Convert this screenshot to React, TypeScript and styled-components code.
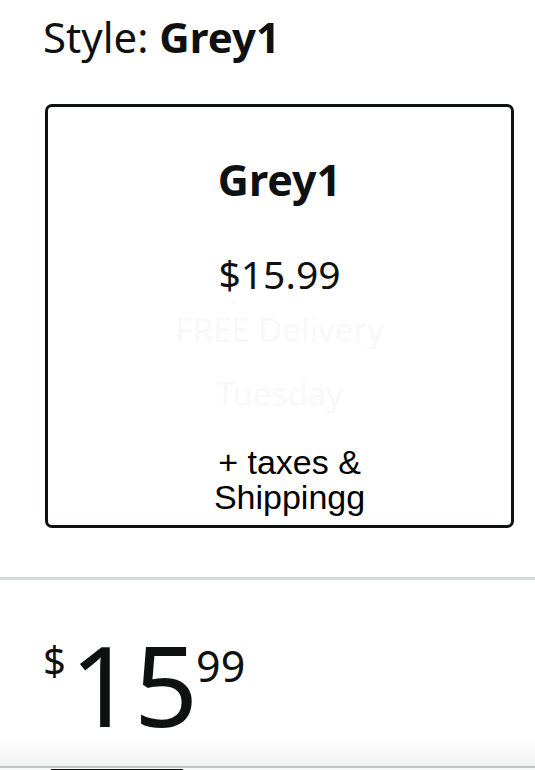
import React from "react";
import styled, { createGlobalStyle } from "styled-components";

const GlobalStyle = createGlobalStyle`
  html, body {
    margin: 0;
    padding: 0;
    background: #ffffff;
  }
  body {
    font-family: "Noto Sans", "Open Sans", Arial, sans-serif;
    color: #0f1111;
  }
`;

const Page = styled.div`
  width: 535px;
  height: 770px;
  display: flex;
  flex-direction: column;
  overflow: hidden;

  & > * {
    flex-shrink: 0;
  }
`;

const StyleLabel = styled.div`
  padding: 13px 0 0 43px;
  font-size: 42px;
  line-height: 48px;
  color: #0f1111;

  b {
    font-weight: 700;
  }
`;

const OptionCard = styled.div`
  box-sizing: border-box;
  margin: 43px 21px 0 45px;
  height: 424px;
  border: 3px solid #0f1111;
  border-radius: 7px;
  display: flex;
  flex-direction: column;
  align-items: center;
`;

const OptionName = styled.div`
  margin-top: 48px;
  font-size: 43px;
  font-weight: 700;
  line-height: 50px;
`;

const OptionPrice = styled.div`
  margin-top: 47px;
  font-size: 39px;
  line-height: 44px;
`;

// faint leftover of the delivery line, barely visible on the card
const GhostLine = styled.div<{ gap: number }>`
  margin-top: ${({ gap }) => gap}px;
  font-size: 33px;
  line-height: 40px;
  color: #f8f8f8;
`;

const TaxNote = styled.div`
  margin-top: auto;
  margin-bottom: 10px;
  padding-left: 20px;
  width: 190px;
  text-align: center;
  font-family: "Liberation Sans", Arial, sans-serif;
  font-size: 34px;
  line-height: 35px;
  color: #000000;
`;

const Divider = styled.div`
  margin-top: 49px;
  height: 3px;
  background: #d5d9d9;
`;

const PriceRow = styled.div`
  display: flex;
  align-items: flex-start;
  padding: 48px 0 0 43px;
  color: #0f1111;
  line-height: 1;
`;

const PriceSymbol = styled.span`
  margin-top: 12px;
  font-size: 40px;
`;

const PriceWhole = styled.span`
  margin-left: 4px;
  font-size: 112px;
`;

const PriceFraction = styled.span`
  margin-top: 16px;
  margin-left: -2px;
  font-size: 43px;
`;

const BottomShade = styled.div`
  margin-top: auto;
  height: 26px;
  background: linear-gradient(to bottom, #ffffff, #f1f2f2);
`;

const TabBar = styled.div`
  height: 4px;
  border-top: 2px solid #bfc4c4;
  background: #f7f8f8;
`;

const TabIndicator = styled.div`
  margin-left: 51px;
  width: 132px;
  height: 3px;
  margin-top: 1px;
  background: #0f1111;
`;

export default function App() {
  return (
    <Page>
      <GlobalStyle />
      <StyleLabel>
        Style: <b>Grey1</b>
      </StyleLabel>
      <OptionCard>
        <OptionName>Grey1</OptionName>
        <OptionPrice>$15.99</OptionPrice>
        <GhostLine gap={14}>FREE Delivery</GhostLine>
        <GhostLine gap={24}>Tuesday</GhostLine>
        <TaxNote>+ taxes &amp; Shippingg</TaxNote>
      </OptionCard>
      <Divider />
      <PriceRow>
        <PriceSymbol>$</PriceSymbol>
        <PriceWhole>15</PriceWhole>
        <PriceFraction>99</PriceFraction>
      </PriceRow>
      <BottomShade />
      <TabBar>
        <TabIndicator />
      </TabBar>
    </Page>
  );
}
